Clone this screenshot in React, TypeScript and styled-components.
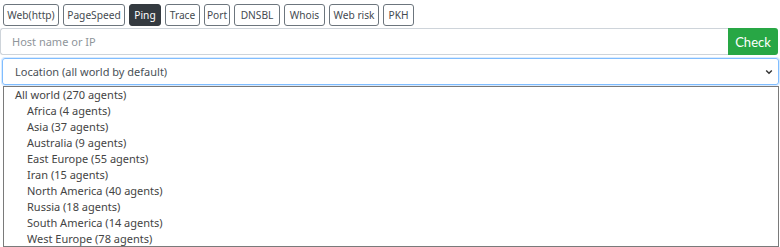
import React from 'react';
import styled, { createGlobalStyle } from 'styled-components';

const GlobalStyle = createGlobalStyle`
  html, body {
    margin: 0;
    padding: 0;
    background: #ffffff;
    font-family: "Noto Sans", "Open Sans", sans-serif;
    color: #212529;
    overflow: hidden;
  }
`;

// tool tabs with their measured widths
const tools = [
  { label: 'Web(http)', w: 56 },
  { label: 'PageSpeed', w: 62 },
  { label: 'Ping', w: 32 },
  { label: 'Trace', w: 35 },
  { label: 'Port', w: 26 },
  { label: 'DNSBL', w: 46 },
  { label: 'Whois', w: 41 },
  { label: 'Web risk', w: 50 },
  { label: 'PKH', w: 31 },
];

const regions = [
  { name: 'All world', agents: 270, sub: false },
  { name: 'Africa', agents: 4, sub: true },
  { name: 'Asia', agents: 37, sub: true },
  { name: 'Australia', agents: 9, sub: true },
  { name: 'East Europe', agents: 55, sub: true },
  { name: 'Iran', agents: 15, sub: true },
  { name: 'North America', agents: 40, sub: true },
  { name: 'Russia', agents: 18, sub: true },
  { name: 'South America', agents: 14, sub: true },
  { name: 'West Europe', agents: 78, sub: true },
];

const Page = styled.div`
  width: 780px;
  height: 247px;
  position: relative;
  overflow: hidden;
`;

const ToolBar = styled.div`
  display: flex;
  gap: 4px;
  padding: 4px 0 0 3px;
`;

const ToolButton = styled.button<{ $active?: boolean; $w: number }>`
  width: ${p => p.$w}px;
  height: 22px;
  padding: 0;
  border: 1px solid ${p => (p.$active ? '#343a40' : '#6c757d')};
  border-radius: 3px;
  background: ${p => (p.$active ? '#343a40' : '#ffffff')};
  color: ${p => (p.$active ? '#ffffff' : '#444a50')};
  font-family: "Noto Sans", sans-serif;
  font-size: 10.2px;
  line-height: 20px;
  white-space: nowrap;
  cursor: pointer;
`;

const SearchRow = styled.div`
  display: flex;
  margin-top: 2px;
  height: 27px;
`;

const HostInput = styled.input`
  flex: 1;
  height: 27px;
  box-sizing: border-box;
  border: 1px solid #ced4da;
  border-right: none;
  border-radius: 3px 0 0 3px;
  padding: 0 11px;
  font-family: "Noto Sans", sans-serif;
  font-size: 11px;
  color: #495057;
  outline: none;
  &::placeholder {
    color: #8f959b;
  }
`;

const CheckButton = styled.button`
  width: 50px;
  height: 27px;
  margin-right: 2px;
  border: none;
  border-radius: 0 3px 3px 0;
  background: #28a745;
  color: #ffffff;
  font-family: Lato, sans-serif;
  font-size: 13px;
  padding: 0;
`;

const SelectWrap = styled.div`
  position: relative;
  margin: 3px 1px 0 2px;
`;

const SelectBox = styled.div`
  height: 27px;
  box-sizing: border-box;
  border: 1px solid #80bdff;
  border-radius: 3px;
  box-shadow: 0 0 0 1px rgba(128, 189, 255, 0.3);
  display: flex;
  align-items: center;
  justify-content: space-between;
  padding: 0 5px 0 12px;
  font-family: "Noto Sans", sans-serif;
  font-size: 11px;
  color: #495057;
`;

const Chevron = styled.svg`
  width: 8px;
  height: 8px;
`;

const OptionList = styled.ul`
  position: absolute;
  top: 28px;
  left: 1px;
  right: 0;
  margin: 0;
  padding: 0;
  list-style: none;
  background: #ffffff;
  border: 1px solid #7a7a7a;
  height: 161px;
  box-sizing: border-box;
  z-index: 2;
`;

const OptionItem = styled.li<{ $sub: boolean }>`
  height: 16px;
  line-height: 16px;
  padding-left: ${p => (p.$sub ? '23px' : '11px')};
  font-family: "Noto Sans", sans-serif;
  font-size: 11px;
  color: #444444;
  white-space: nowrap;
`;

export default function App() {
  return (
    <Page>
      <GlobalStyle />
      <ToolBar>
        {tools.map(t => (
          <ToolButton key={t.label} $w={t.w} $active={t.label === 'Ping'}>{t.label}</ToolButton>
        ))}
      </ToolBar>
      <SearchRow>
        <HostInput placeholder="Host name or IP" />
        <CheckButton>Check</CheckButton>
      </SearchRow>
      <SelectWrap>
        <SelectBox>
          <span>Location (all world by default)</span>
          <Chevron viewBox="0 0 10 10">
            <path d="M1.5 3 L5 6.5 L8.5 3" fill="none" stroke="#333" strokeWidth="1.8" />
          </Chevron>
        </SelectBox>
        <OptionList>
          {regions.map(r => (
            <OptionItem key={r.name} $sub={r.sub}>
              {r.name} ({r.agents} agents)
            </OptionItem>
          ))}
        </OptionList>
      </SelectWrap>
    </Page>
  );
}
